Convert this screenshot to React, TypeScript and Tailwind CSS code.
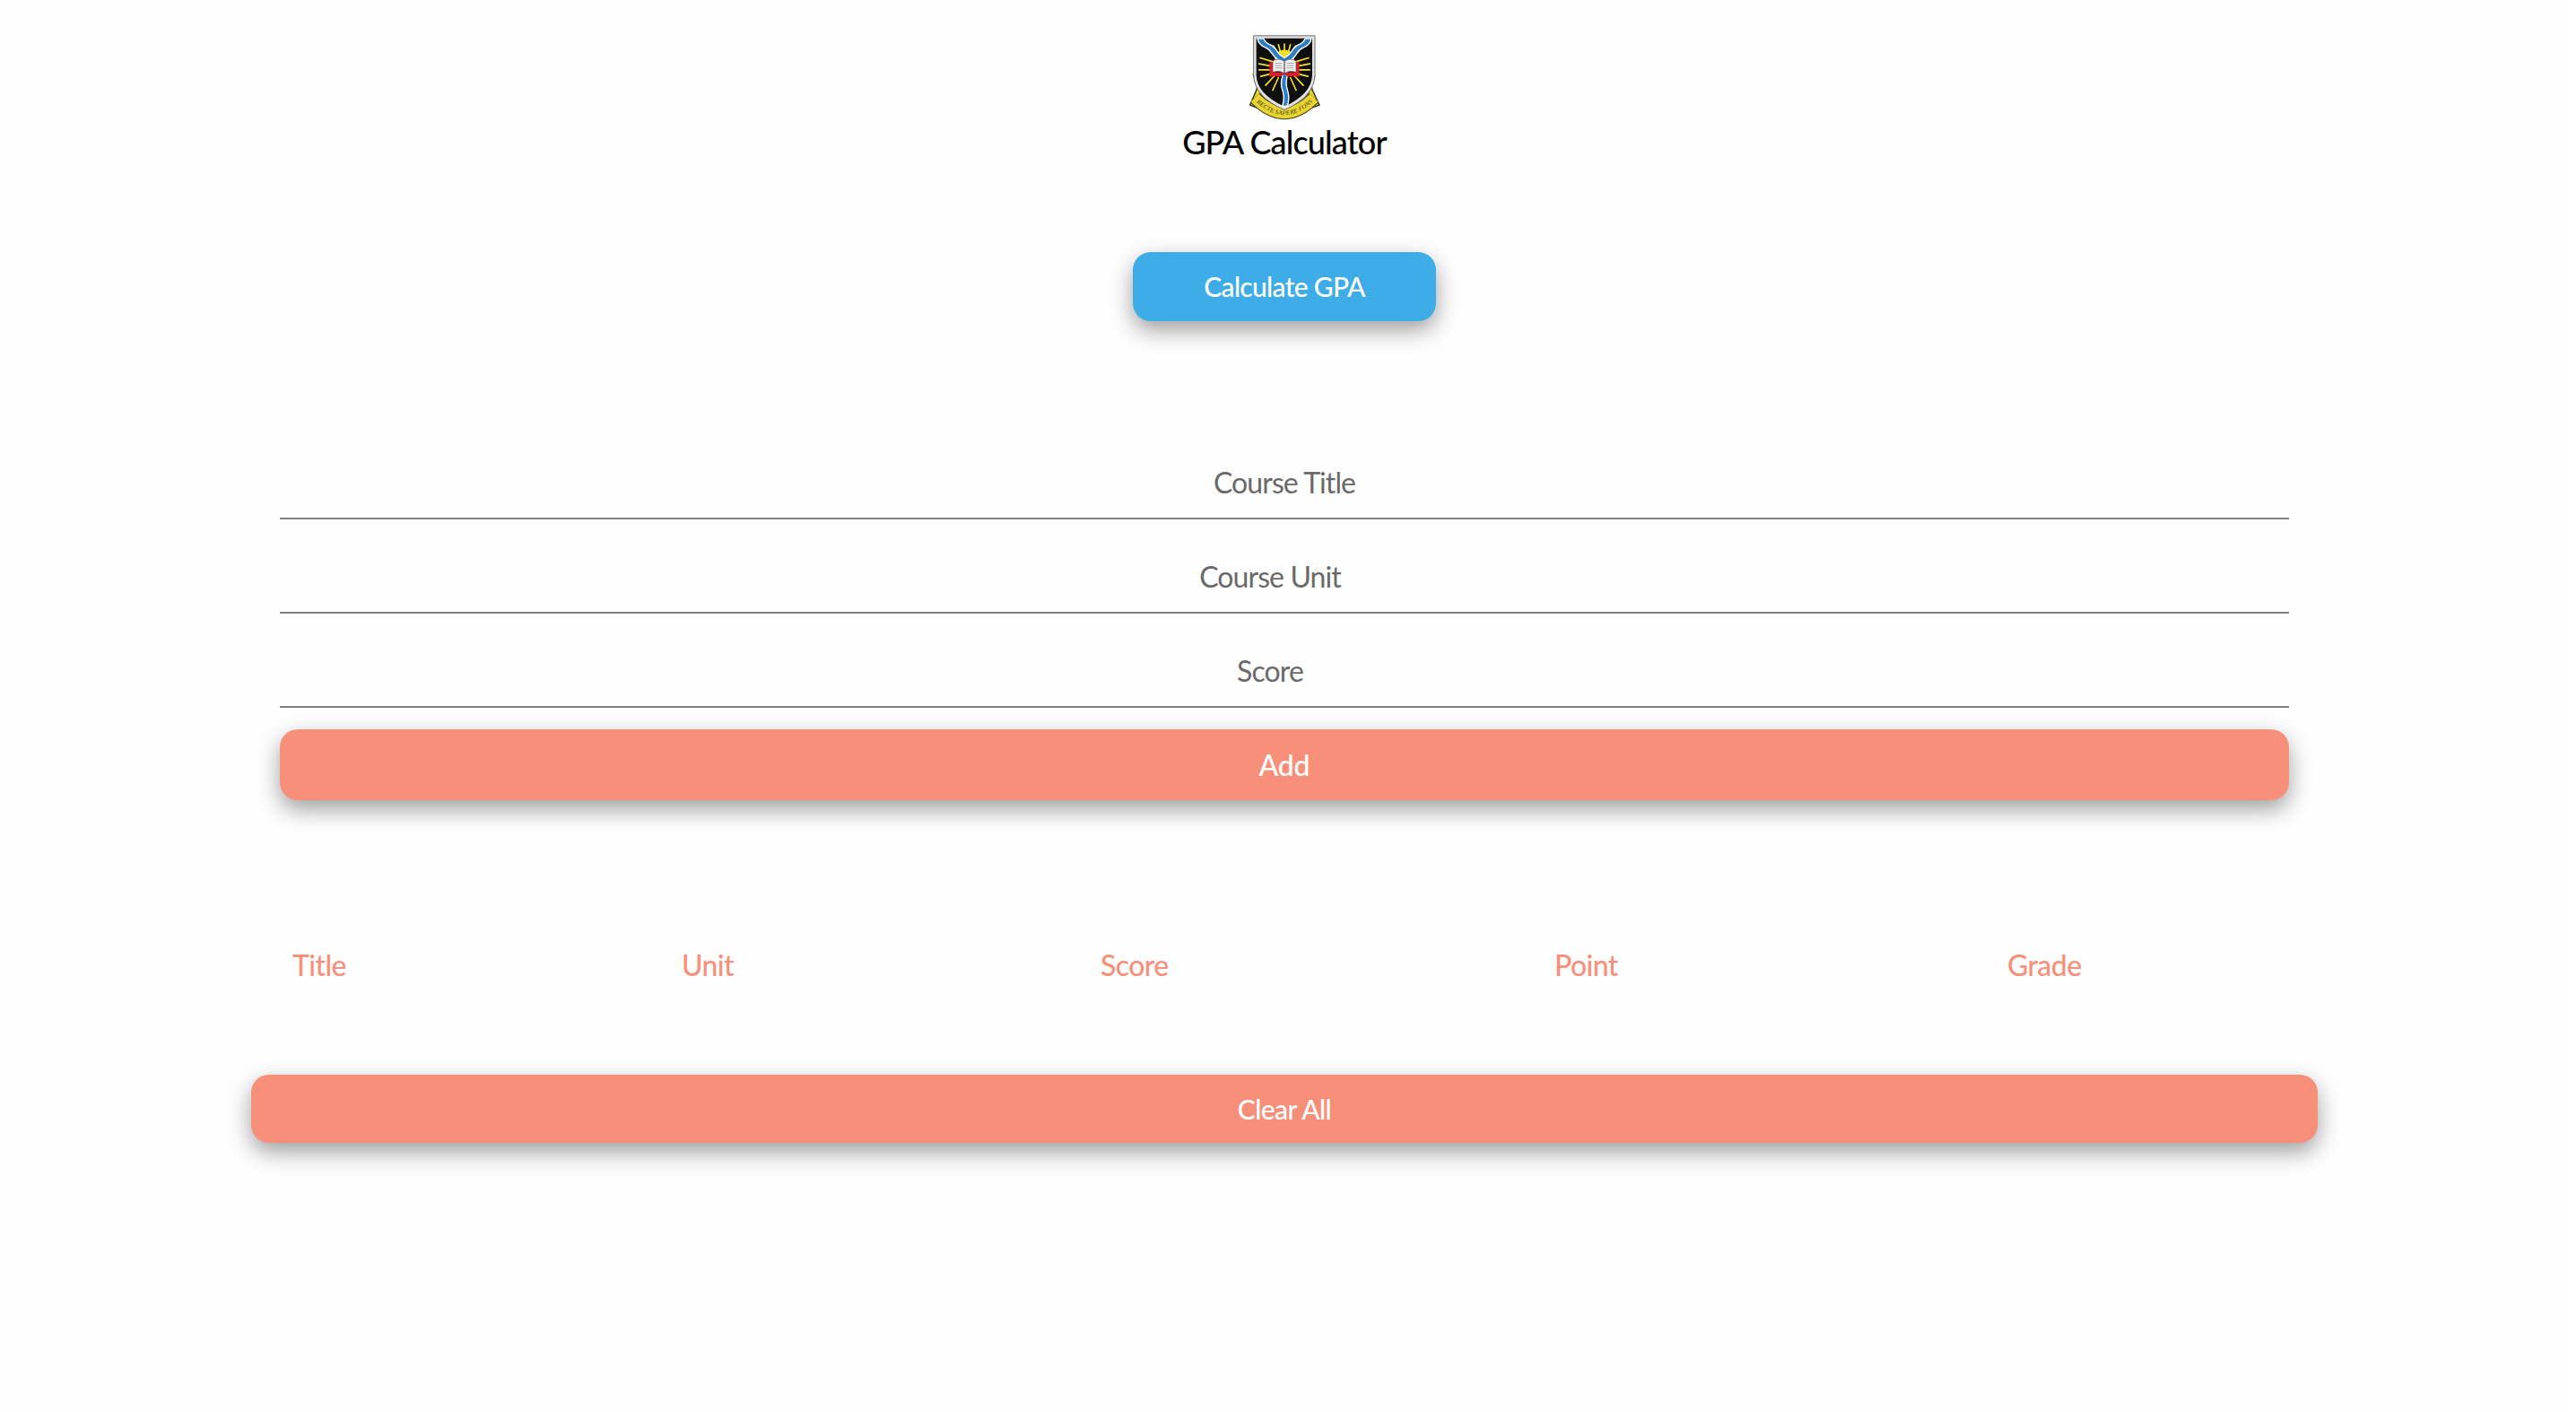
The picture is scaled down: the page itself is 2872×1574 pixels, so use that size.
const columns = ["Title", "Unit", "Score", "Point", "Grade"]

function Crest() {
  return (
    <svg viewBox="305 50 240 290" className="block w-[80px] h-[97px]">
      {/* ribbon and side scrolls */}
      <path d="M322 192 L338 205 L332 238 L310 290 L332 298 L350 262 Z" fill="#e6cf2c" stroke="#2a2a18" strokeWidth="4" />
      <path d="M527 192 L512 205 L518 238 L542 290 L518 298 L500 262 Z" fill="#e6cf2c" stroke="#2a2a18" strokeWidth="4" />
      <path id="crest-ribbon" d="M326 266 Q425 366 524 266" fill="none" stroke="#3a3a20" strokeWidth="44" />
      <path d="M326 266 Q425 366 524 266" fill="none" stroke="#e9d430" strokeWidth="38" />
      <text fontSize="21" fontStyle="italic" fill="#3a3a1a" fontFamily="Liberation Serif, serif" dy="7">
        <textPath href="#crest-ribbon" startOffset="6%">RECTE  SAPERE  FONS</textPath>
      </text>
      {/* shield */}
      <path d="M322 58 H527 V190 Q525 262 425 306 Q324 262 322 190 Z" fill="#e2e2e2" stroke="#6f6f6f" strokeWidth="3" />
      <path d="M331 67 H518 V190 Q516 254 425 295 Q333 254 331 190 Z" fill="#0f0f0f" />
      {/* sun rays */}
      <g stroke="#f4e024" strokeWidth="5" strokeLinecap="round">
        <path d="M425 165 L425 86" />
        <path d="M425 165 L405 88" />
        <path d="M425 165 L445 88" />
        <path d="M420 150 L388 92" />
        <path d="M430 150 L462 92" />
        <path d="M390 146 L344 132" />
        <path d="M460 146 L506 132" />
        <path d="M385 160 L340 152" />
        <path d="M465 160 L510 152" />
        <path d="M385 172 L340 172" />
        <path d="M465 172 L510 172" />
        <path d="M385 184 L346 194" />
        <path d="M465 184 L504 194" />
        <path d="M392 192 L362 224" />
        <path d="M458 192 L488 224" />
        <path d="M405 198 L386 240" />
        <path d="M445 198 L464 240" />
      </g>
      <path d="M392 138 A33 33 0 0 1 458 138 Z" fill="#f4e024" />
      {/* river */}
      <path d="M335 68 Q338 88 362 98 Q376 104 384 118 Q396 136 418 146 L418 196 Q410 220 420 245 Q426 270 418 294 L434 294 Q444 270 436 242 Q428 220 434 196 L434 146 Q456 136 466 118 Q474 104 488 98 Q512 88 515 68 L494 68 Q488 82 472 88 Q458 94 448 112 Q438 126 425 132 Q412 126 402 112 Q392 94 378 88 Q362 82 356 68 Z" fill="#2e80c6" stroke="#ffffff" strokeWidth="4" />
      {/* book */}
      <path d="M375 146 V194 H414 L425 186 L436 194 H475 V146 H463 V180 H387 V146 Z" fill="#d61f2a" />
      <path d="M386 142 Q408 130 425 144 Q442 130 464 142 V180 Q442 172 425 184 Q408 172 386 180 Z" fill="#eeeeee" stroke="#555555" strokeWidth="2" />
      <path d="M425 144 V184" stroke="#333333" strokeWidth="3" />
      <path d="M394 150 H417 M394 158 H417 M394 166 H417 M433 150 H456 M433 158 H456 M433 166 H456" stroke="#a8a8a8" strokeWidth="3" />
    </svg>
  )
}

function Field({ label, number, last }: { label: string; number?: boolean; last?: boolean }) {
  return (
    <input
      type={number ? "number" : "text"}
      placeholder={label}
      className={`block w-full h-[61px] pb-[20px] border-b-2 border-[#808080] bg-transparent text-center text-[32px] tracking-[-0.9px] outline-none placeholder:text-[#696969] ${number ? "pr-[17px]" : ""} ${last ? "" : "mb-[44px]"}`}
    />
  )
}

export default function App() {
  return (
    <div className="w-[2864px] min-h-[1574px] bg-[#fefefe] font-['Lato','Noto_Sans',sans-serif]">
      <header className="flex flex-col items-center pt-[37px]">
        <Crest />
        <h1 className="text-[36px] leading-[48px] tracking-[-0.85px] font-medium text-black">GPA Calculator</h1>
      </header>

      <div className="flex justify-center mt-[99px]">
        <button className="w-[338px] h-[77px] rounded-[20px] bg-[#3eace6] text-[30px] tracking-[-0.7px] font-medium text-white shadow-[0_10px_26px_rgba(0,0,0,0.38)]">
          Calculate GPA
        </button>
      </div>

      <form className="mx-[312px] mt-[160px]">
        <Field label="Course Title" />
        <Field label="Course Unit" number />
        <Field label="Score" number last />
        <button type="button" className="block mt-[24px] w-full h-[79px] rounded-[20px] bg-[#f7907b] text-[32px] tracking-[-0.2px] font-medium text-white shadow-[0_10px_26px_rgba(0,0,0,0.38)]">
          Add
        </button>
      </form>

      <div className="mx-[312px] mt-[162px] grid grid-cols-[434px_467px_506px_505px_328px] text-[32px] leading-[44px] tracking-[-0.6px] font-medium text-[#f7907b]">
        {columns.map((col) => (
          <div key={col} className="px-[14px]">
            {col}
          </div>
        ))}
      </div>

      <div className="mx-[280px] mt-[100px]">
        <button className="block w-full h-[76px] rounded-[20px] bg-[#f68f7a] text-[30px] tracking-[-0.6px] font-medium text-white shadow-[0_10px_26px_rgba(0,0,0,0.38)]">
          Clear All
        </button>
      </div>
    </div>
  )
}
